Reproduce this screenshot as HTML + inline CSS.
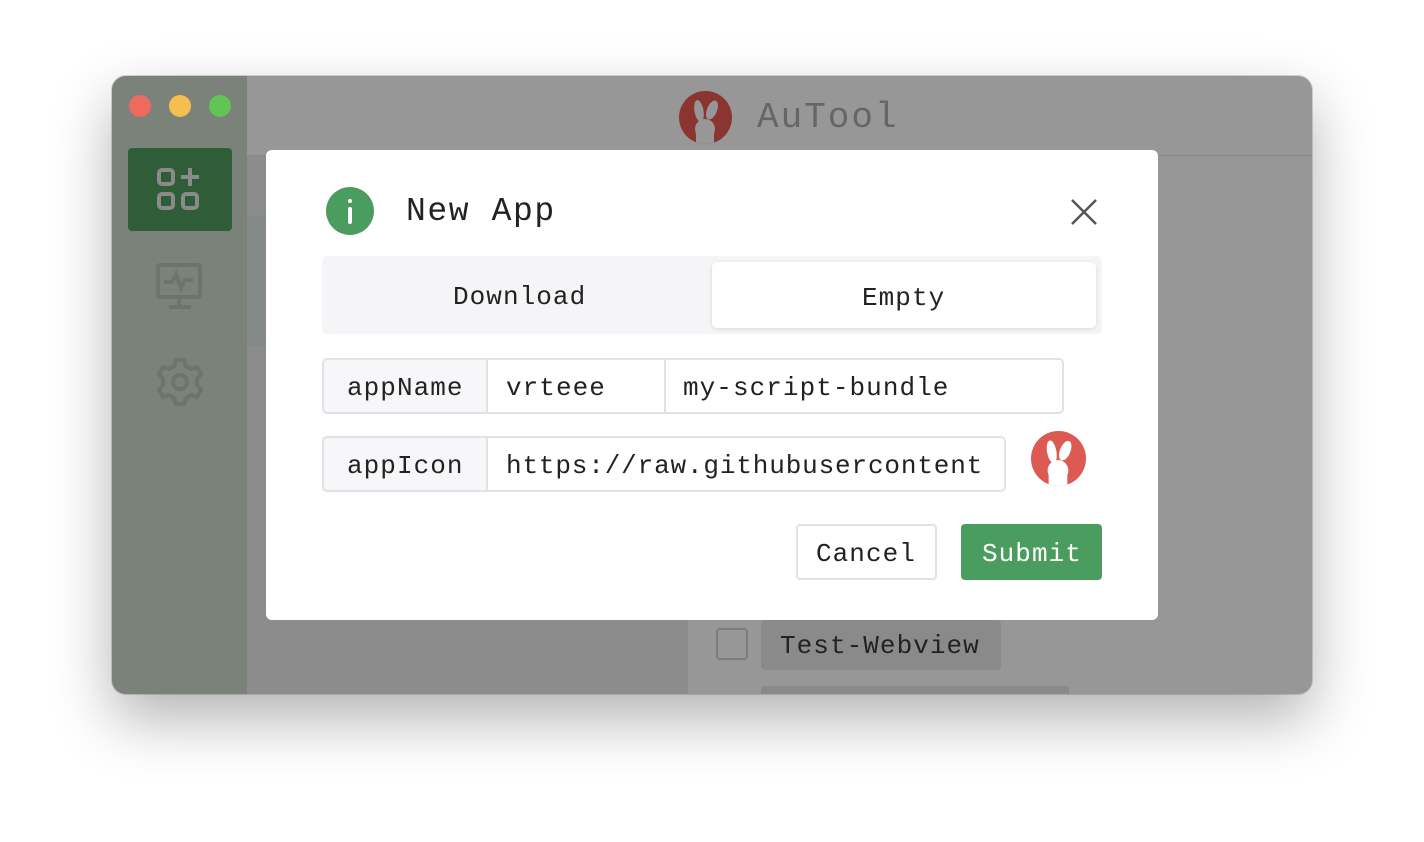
<!DOCTYPE html>
<html><head><meta charset="utf-8"><style>
*{box-sizing:border-box;margin:0;padding:0}
body{width:1424px;height:842px;background:#fff;position:relative;overflow:hidden;font-family:"Liberation Mono","Courier New",monospace;color:#222}
.win{position:absolute;left:112px;top:76px;width:1200px;height:618px;border-radius:14px;overflow:hidden;background:#979797;box-shadow:0 25px 60px rgba(0,0,0,.3),0 0 0 1px rgba(0,0,0,.15)}
.side{position:absolute;left:0;top:0;width:135px;height:100%;background:#7a8279}
.dot{position:absolute;top:19px;width:22px;height:22px;border-radius:50%}
.abs{position:absolute}
.t{font-size:26px;letter-spacing:1.05px;position:absolute;white-space:nowrap}
.modal{position:absolute;left:266px;top:150px;width:892px;height:470px;background:#fff;border-radius:6px}
.cell{position:absolute;height:56px;border:2px solid #e2e2e6;display:flex;align-items:center}
</style></head><body>
<div class="win">
 <div class="side"></div>
 <div class="dot" style="left:17px;background:#ee6a5f"></div>
 <div class="dot" style="left:57px;background:#f5bf4f"></div>
 <div class="dot" style="left:97px;background:#61c554"></div>
 <div class="abs" style="left:135px;top:79px;width:1065px;height:1px;background:#8a8a8a"></div>
 <div class="abs" style="left:135px;top:80px;width:441px;height:538px;background:#8c8c8c"></div>
 <div class="abs" style="left:135px;top:140px;width:20px;height:130px;background:#838a88"></div>
 <div class="abs" style="left:16px;top:72px;width:104px;height:83px;background:#2e5d38;border-radius:4px"></div>
 <svg class="abs" style="left:40px;top:88px" width="56" height="52" viewBox="0 0 56 52" fill="none" stroke="#8a8a8a" stroke-width="4"><rect x="7" y="6" width="14" height="14" rx="3"/><rect x="7" y="30" width="14" height="14" rx="3"/><rect x="31" y="30" width="14" height="14" rx="3"/><path d="M38 4v18M29 13h18"/></svg>
 <svg class="abs" style="left:40px;top:186px" width="56" height="50" viewBox="0 0 56 50" fill="none" stroke="#6e736d" stroke-width="4"><rect x="6" y="3" width="42" height="32" rx="2"/><path d="M12 20h8l4-8 5 14 4-8h8M27 35v8M17 45h22"/></svg>
 <svg class="abs" style="left:42px;top:280px" width="52" height="52" viewBox="0 0 52 52" fill="none" stroke="#6e736d" stroke-width="4"><circle cx="26" cy="26" r="7"/><path d="M22 4h8l2 6 5 3 6-2 4 7-4 5v6l4 5-4 7-6-2-5 3-2 6h-8l-2-6-5-3-6 2-4-7 4-5v-6l-4-5 4-7 6 2 5-3z"/></svg>
 <div class="abs" style="left:567px;top:15px;width:53px;height:53px;border-radius:50%;background:#8a3530;overflow:hidden">
  <svg width="53" height="53" viewBox="0 0 53 53"><ellipse cx="20" cy="20" rx="4.5" ry="11" fill="#979797" transform="rotate(-10 20 20)"/><ellipse cx="33" cy="19" rx="5" ry="10" fill="#979797" transform="rotate(22 33 19)"/><circle cx="26" cy="38" r="10" fill="#979797"/><rect x="17" y="40" width="18" height="14" fill="#979797"/></svg>
 </div>
 <div class="t" style="left:645px;top:21px;font-size:36px;letter-spacing:2px;color:#666">AuTool</div>
 <div class="abs" style="left:604px;top:552px;width:32px;height:32px;border:2px solid #7c7c7c;border-radius:4px"></div>
 <div class="abs" style="left:649px;top:544px;width:240px;height:50px;background:#8a8a8a;border-radius:4px"></div>
 <div class="t" style="left:668px;top:555px;color:#222">Test-Webview</div>
 <div class="abs" style="left:649px;top:610px;width:308px;height:20px;background:#8a8a8a;border-radius:4px"></div>
</div>
<div class="modal">
 <div class="abs" style="left:60px;top:37px;width:48px;height:48px;border-radius:50%;background:#4a9d5f"></div>
 <div class="abs" style="left:82px;top:49px;width:4px;height:4px;border-radius:2px;background:#fff"></div>
 <div class="abs" style="left:82px;top:57px;width:4px;height:17px;border-radius:2px;background:#fff"></div>
 <div class="t" style="left:140px;top:43px;font-size:33px;letter-spacing:1.6px">New App</div>
 <svg class="abs" style="left:804px;top:48px" width="28" height="28" viewBox="0 0 28 28" stroke="#555" stroke-width="2.5"><path d="M2 2l24 24M26 2L2 26"/></svg>
 <div class="abs" style="left:56px;top:106px;width:780px;height:78px;background:#f5f5f7;border-radius:5px"></div>
 <div class="abs" style="left:446px;top:112px;width:384px;height:66px;background:#fff;border-radius:5px;box-shadow:0 1px 4px rgba(0,0,0,.12)"></div>
 <div class="t" style="left:187px;top:132px">Download</div>
 <div class="t" style="left:596px;top:133px">Empty</div>
 <div class="cell" style="left:56px;top:208px;width:166px;background:#f7f7f9;border-radius:5px 0 0 5px"></div>
 <div class="cell" style="left:220px;top:208px;width:180px"></div>
 <div class="cell" style="left:398px;top:208px;width:400px;border-radius:0 5px 5px 0"></div>
 <div class="t" style="left:81px;top:223px">appName</div>
 <div class="t" style="left:240px;top:223px">vrteee</div>
 <div class="t" style="left:417px;top:223px">my-script-bundle</div>
 <div class="cell" style="left:56px;top:286px;width:166px;background:#f7f7f9;border-radius:5px 0 0 5px"></div>
 <div class="cell" style="left:220px;top:286px;width:520px;border-radius:0 5px 5px 0"></div>
 <div class="t" style="left:81px;top:301px">appIcon</div>
 <div class="t" style="left:240px;top:301px;letter-spacing:.85px">https://raw.githubusercontent</div>
 <div class="abs" style="left:765px;top:281px;width:55px;height:55px;border-radius:50%;background:#dc5a51;overflow:hidden">
  <svg width="55" height="55" viewBox="0 0 53 53"><ellipse cx="20" cy="20" rx="4.5" ry="11" fill="#fff" transform="rotate(-10 20 20)"/><ellipse cx="33" cy="19" rx="5" ry="10" fill="#fff" transform="rotate(22 33 19)"/><circle cx="26" cy="38" r="10" fill="#fff"/><rect x="17" y="40" width="18" height="14" fill="#fff"/></svg>
 </div>
 <div class="abs" style="left:530px;top:374px;width:141px;height:56px;border:2px solid #e2e2e6;border-radius:4px"></div>
 <div class="t" style="left:550px;top:389px">Cancel</div>
 <div class="abs" style="left:695px;top:374px;width:141px;height:56px;background:#4a9d5f;border-radius:4px"></div>
 <div class="t" style="left:716px;top:389px;color:#fff">Submit</div>
</div>
</body></html>
